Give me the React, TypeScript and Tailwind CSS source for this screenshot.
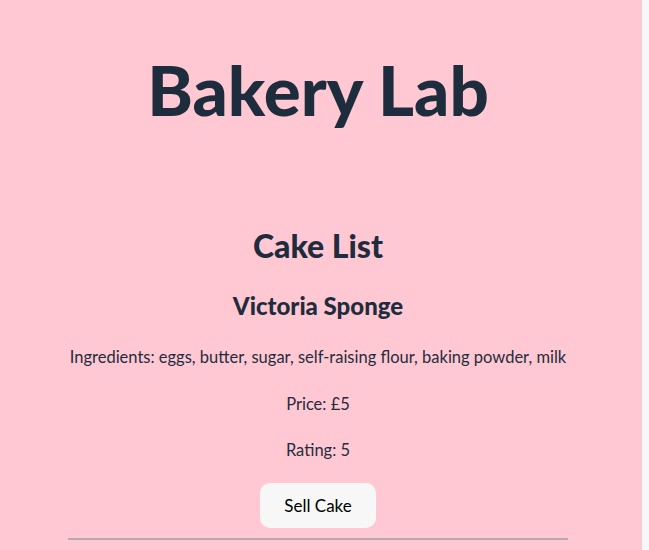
export default function App() {
  return (
    <div className="flex min-h-screen w-full bg-[#f7f7f7]">
      <main
        className="flex w-[642px] flex-col items-center bg-[#ffc8d3] pr-[6px] text-[#1e2d3d]"
        style={{ fontFamily: "Lato, 'Open Sans', sans-serif" }}
      >
        <h1 className="mt-[58px] text-[69px] font-black leading-[64px]">Bakery Lab</h1>
        <h2 className="mt-[106px] text-[32px] font-black leading-[36px]">Cake List</h2>
        <h3 className="mt-[28px] text-[24px] font-black leading-[28px]">Victoria Sponge</h3>
        <p className="mt-[25px] text-[16.5px] leading-[24px]">
          Ingredients: eggs, butter, sugar, self-raising flour, baking powder, milk
        </p>
        <p className="mt-[23px] text-[16.5px] leading-[24px]">Price: £5</p>
        <p className="mt-[22px] text-[16.5px] leading-[24px]">Rating: 5</p>
        <button className="mt-[21px] h-[45px] w-[116px] rounded-[10px] bg-[#f7f7f7] text-[17px] text-black">
          Sell Cake
        </button>
        <hr className="mt-[10px] w-[500px] border-t-2 border-[#b8a9ad]" />
      </main>
    </div>
  );
}
